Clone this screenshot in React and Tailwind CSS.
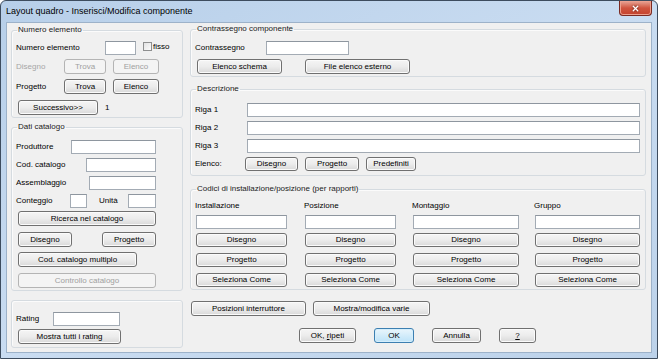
import { X } from "lucide-react"

function Btn({ children, className = "", disabled, focused }) {
    const look = disabled
        ? "border-[#b4b4b4] bg-[#f4f4f4] text-[#a0a0a0]"
        : focused
            ? "border-[#3c7fb1] bg-gradient-to-b from-[#e9f5fc] to-[#bde3f8] text-black shadow-[inset_0_0_0_1px_#d4eefc]"
            : "border-[#707070] bg-gradient-to-b from-[#f5f5f5] via-[#ececec] to-[#d9d9d9] text-black shadow-[inset_0_0_0_1px_#fbfbfb]"
    return (
        <button type="button" className={`flex shrink-0 items-center justify-center rounded-[3px] border leading-none ${look} ${className}`}>
            <span>{children}</span>
        </button>
    )
}

function Field({ className = "" }) {
    return <input readOnly className={`h-[14px] shrink-0 border border-[#a3abb4] border-t-[#8e969f] bg-white outline-none ${className}`} />
}

function Group({ title, className = "", children }) {
    return (
        <fieldset className={`rounded-[3px] border border-[#d5dbe0] shadow-[inset_1px_1px_0_#fbfbfb] ${className}`}>
            <legend className="ml-[5px] px-[1px] text-[8px] leading-[10px] text-[#1a1a1a]">{title}</legend>
            {children}
        </fieldset>
    )
}

function CodeCol({ label, w, className = "" }) {
    return (
        <div className={`flex flex-col ${className}`} style={{ width: w }}>
            <div className="h-[11px] leading-[11px] -ml-[1px]">{label}</div>
            <Field className="mt-[4px] w-full" />
            <Btn className="mt-[4px] h-[14px] w-full">Disegno</Btn>
            <Btn className="mt-[6px] h-[14px] w-full">Progetto</Btn>
            <Btn className="mt-[6px] h-[14px] w-full">Seleziona Come</Btn>
        </div>
    )
}

export default function App() {
    return (
        <div className="w-[658px] h-[359px] font-['Liberation_Sans',Arial,sans-serif] text-[8px] text-black">
            <div className="flex h-full w-full flex-col rounded-t-[6px] border border-[#3d4c5e] bg-gradient-to-br from-[#b7cfe9] via-[#c9dcf1] to-[#bcd2ea]">
                <div className="flex h-[21px] shrink-0 items-start">
                    <div className="pl-[5px] pt-[4px] text-[9px] leading-[12px] text-black">Layout quadro - Inserisci/Modifica componente</div>
                    <div className="ml-auto mr-[5px] flex h-[15px] w-[33px] items-center justify-center rounded-b-[4px] border border-t-0 border-[#7a2a22] bg-gradient-to-b from-[#e7a597] via-[#d0553f] to-[#c4422d] shadow-[inset_0_0_0_1px_#eca08e]">
                        <X size={9} strokeWidth={3.5} className="text-white drop-shadow-[0_0_1px_#5a1a10]" />
                    </div>
                </div>

                <div className="mx-[5px] mb-[5px] flex flex-1 border border-[#9db2c9] bg-[#f0f0f0] pl-[4px] pt-[1px]">
                    {/* colonna sinistra */}
                    <div className="flex w-[172px] flex-col">
                        <Group title="Numero elemento" className="mt-[1px] h-[93px]">
                            <div className="flex flex-col pl-[4px] pt-[6px]">
                                <div className="flex h-[14px] items-center">
                                    <span className="w-[89px]">Numero elemento</span>
                                    <Field className="w-[31px]" />
                                    <div className="ml-[7px] flex items-start self-start pt-[1px]">
                                        <div className="h-[9px] w-[9px] border border-[#8e8f8f] bg-gradient-to-br from-[#e2e2e2] to-[#fbfbfb]" />
                                        <span className="ml-[1px] leading-[9px]">fisso</span>
                                    </div>
                                </div>
                                <div className="mt-[4px] flex h-[15px] items-center">
                                    <span className="w-[48px] text-[#a6a6a6]">Disegno</span>
                                    <Btn disabled className="h-[15px] w-[42px]">Trova</Btn>
                                    <Btn disabled className="ml-[7px] h-[15px] w-[46px]">Elenco</Btn>
                                </div>
                                <div className="mt-[5px] flex h-[15px] items-center">
                                    <span className="w-[48px]">Progetto</span>
                                    <Btn className="h-[15px] w-[42px]">Trova</Btn>
                                    <Btn className="ml-[7px] h-[15px] w-[46px]">Elenco</Btn>
                                </div>
                                <div className="mt-[6px] flex h-[15px] items-center">
                                    <Btn className="ml-[2px] h-[15px] w-[80px]">Successivo&gt;&gt;</Btn>
                                    <span className="ml-[7px]">1</span>
                                </div>
                            </div>
                        </Group>

                        <Group title="Dati catalogo" className="mt-[4px] h-[169px]">
                            <div className="flex flex-col pl-[4px] pt-[8px]">
                                <div className="flex h-[14px] items-center">
                                    <span className="w-[55px]">Produttore</span>
                                    <Field className="w-[85px]" />
                                </div>
                                <div className="mt-[4px] flex h-[14px] items-center">
                                    <span className="w-[70px]">Cod. catalogo</span>
                                    <Field className="w-[70px]" />
                                </div>
                                <div className="mt-[4px] flex h-[14px] items-center">
                                    <span className="w-[73px]">Assemblaggio</span>
                                    <Field className="w-[67px]" />
                                </div>
                                <div className="mt-[4px] flex h-[14px] items-center">
                                    <span className="w-[54px]">Conteggio</span>
                                    <Field className="w-[17px]" />
                                    <span className="ml-[12px] w-[29px]">Unità</span>
                                    <Field className="w-[28px]" />
                                </div>
                                <Btn className="ml-[2px] mt-[3px] h-[15px] w-[138px]">Ricerca nel catalogo</Btn>
                                <div className="ml-[2px] mt-[6px] flex">
                                    <Btn className="h-[15px] w-[54px]">Disegno</Btn>
                                    <Btn className="ml-[30px] h-[15px] w-[54px]">Progetto</Btn>
                                </div>
                                <Btn className="ml-[2px] mt-[5px] h-[15px] w-[119px]">Cod. catalogo multiplo</Btn>
                                <Btn disabled className="ml-[2px] mt-[6px] h-[15px] w-[138px]">Controllo catalogo</Btn>
                            </div>
                        </Group>

                        <div className="mt-[9px] flex h-[48px] flex-col rounded-[3px] border border-[#d5dbe0] pl-[4px] pt-[11px] shadow-[inset_1px_1px_0_#fbfbfb]">
                            <div className="flex h-[14px] items-center">
                                <span className="w-[37px]">Rating</span>
                                <Field className="w-[67px]" />
                            </div>
                            <Btn className="ml-[2px] mt-[3px] h-[15px] w-[103px]">Mostra tutti i rating</Btn>
                        </div>
                    </div>

                    {/* colonna destra */}
                    <div className="ml-[7px] flex w-[456px] flex-col">
                        <Group title="Contrassegno componente" className="h-[53px]">
                            <div className="flex flex-col pl-[4px] pt-[7px]">
                                <div className="flex h-[14px] items-center">
                                    <span className="w-[71px]">Contrassegno</span>
                                    <Field className="w-[83px]" />
                                </div>
                                <div className="ml-[2px] mt-[4px] flex">
                                    <Btn className="h-[15px] w-[85px]">Elenco schema</Btn>
                                    <Btn className="ml-[23px] h-[15px] w-[105px]">File elenco esterno</Btn>
                                </div>
                            </div>
                        </Group>

                        <Group title="Descrizione" className="mt-[7px] h-[92px]">
                            <div className="flex flex-col pl-[4px] pt-[9px]">
                                {["Riga 1", "Riga 2", "Riga 3"].map((r, i) => (
                                    <div key={r} className={`flex h-[14px] items-center ${i === 0 ? "" : "mt-[4px]"}`}>
                                        <span className="w-[52px]">{r}</span>
                                        <Field className="w-[393px]" />
                                    </div>
                                ))}
                                <div className="mt-[4px] flex h-[14px] items-center">
                                    <span className="w-[50px]">Elenco:</span>
                                    <Btn className="h-[14px] w-[53px]">Disegno</Btn>
                                    <Btn className="ml-[7px] h-[14px] w-[54px]">Progetto</Btn>
                                    <Btn className="ml-[7px] h-[14px] w-[50px]">Predefiniti</Btn>
                                </div>
                            </div>
                        </Group>

                        <Group title="Codici di installazione/posizione (per rapporti)" className="mt-[8px] h-[106px]">
                            <div className="flex pl-[5px] pt-[6px]">
                                <CodeCol label="Installazione" w={91} />
                                <CodeCol label="Posizione" w={91} className="ml-[18px]" />
                                <CodeCol label="Montaggio" w={106} className="ml-[17px]" />
                                <CodeCol label="Gruppo" w={105} className="ml-[16px]" />
                            </div>
                        </Group>

                        <div className="mt-[11px] flex">
                            <Btn className="ml-[1px] h-[15px] w-[115px]">Posizioni interruttore</Btn>
                            <Btn className="ml-[7px] h-[15px] w-[117px]">Mostra/modifica varie</Btn>
                        </div>
                        <div className="mt-[12px] flex">
                            <Btn className="ml-[109px] h-[15px] w-[57px]">OK, <span className="underline">r</span>ipeti</Btn>
                            <Btn focused className="ml-[18px] h-[15px] w-[40px]">OK</Btn>
                            <Btn className="ml-[18px] h-[15px] w-[49px]">Annulla</Btn>
                            <Btn className="ml-[18px] h-[15px] w-[37px]"><span className="underline">?</span></Btn>
                        </div>
                    </div>
                </div>
            </div>
        </div>
    )
}
